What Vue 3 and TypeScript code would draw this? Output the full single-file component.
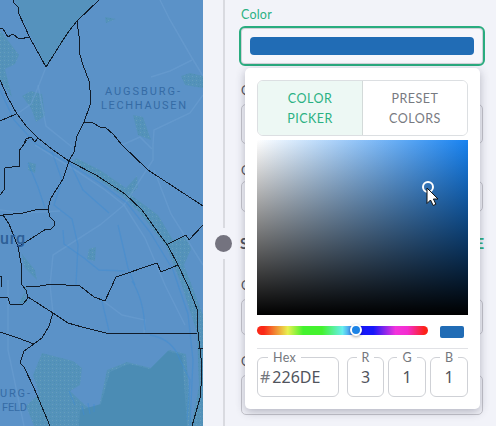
<script setup lang="ts">
import { ref } from 'vue'

interface Channel {
  label: string
  value: string
}

const channels: Channel[] = [
  { label: 'R', value: '3' },
  { label: 'G', value: '1' },
  { label: 'B', value: '1' },
]
const hex = ref('226DE')
const activeTab = ref(0)
const tabs: string[][] = [
  ['COLOR', 'PICKER'],
  ['PRESET', 'COLORS'],
]

const boundaries: string[] = [
  'M13 0 L14 3 L18 7 L19 14 L30 38 L46 67 L63 40 L69 31 L77 21 L99 0',
  'M0 28 L3 29 L8 37 L13 34 L19 39 L30 37',
  'M77 21 L79 36 L80 55 L83 65 L89 81 L90 90 L90 105 L84 122 L77 136 L74 152 L69 161 L63 179 L51 198 L48 208 L50 217 L54 221 L54 226 L51 229 L46 229 L18 247',
  'M84 122 L93 123 L100 127 L106 128 L113 134 L122 145 L148 170 L203 206',
  'M0 80 L8 98 L17 114 L27 127 L38 138 L53 150 L69 161 L96 175 L125 194 L142 210 L157 231 L168 246 L178 265 L188 286 L197 309 L198 332 L201 358 L202 375 L200 398 L192 426',
  'M0 121 L16 114',
  'M24 144 L26 139 L31 137 L35 142 L38 138',
  'M27 140 L19 151 L20 166 L5 168 L4 190 L0 195',
  'M0 216 L3 215 L23 213 L35 210 L48 209',
  'M3 215 L9 224 L13 234 L18 247 L21 263 L22 285 L26 290 L28 298 L23 304 L10 304 L8 298 L0 297',
  'M26 286 L40 286 L52 284 L80 286 L94 297 L105 301 L116 277 L157 263 L161 272 L178 265',
  'M168 244 L186 235 L189 240 L203 225',
  'M28 297 L53 313 L68 323 L82 327 L106 333 L197 333',
  'M53 313 L49 326 L42 338 L34 344 L24 351 L20 363 L24 367 L34 388 L50 426',
  'M0 332 L18 338 L34 344',
  'M198 348 L203 348',
  'M0 276 L2 277 L1 287',
]

const roads: string[] = [
  'M46 67 L39 85 L31 104 L17 114',
  'M160 0 L170 20 L192 58 L203 76',
  'M151 77 L170 71 L192 60',
  'M203 95 L190 113 L154 130 L153 145 L153 160 L140 180 L124 205 L100 225 L53 255 L50 285 L53 313',
  'M35 145 L75 170 L105 190 L124 205 L145 238 L165 285 L185 325',
  'M38 85 L46 126 L72 147',
  'M122 145 L140 137 L152 149',
  'M0 210 L22 213 L60 211',
  'M8 280 L8 350 L24 426',
  'M154 170 L171 214 L203 265',
  'M102 300 L122 315 L145 320 L144 333',
]

const streams: string[] = [
  'M0 90 L14 120 L36 144 L73 166 L100 183 L127 203 L150 232 L173 270 L188 314 L193 360 L190 426',
  'M28 163 L38 187 L45 208',
  'M52 152 L62 180 L54 205 L72 219 L78 245 L76 285',
  'M69 161 L83 190 L109 213',
  'M118 225 L128 268 L135 285',
  'M132 281 Q144 300 145 330',
  'M101 297 L109 331',
  'M150 335 Q173 339 180 360 L190 380 L187 420',
  'M63 230 L64 244 L84 258 L99 270 L125 271',
  'M69 391 L75 405 M82 406 L84 415 M88 403 L90 414 M94 404 L94 412',
]
</script>

<template>
  <main class="screen">
    <svg class="map" width="203" height="426" viewBox="0 0 203 426">
      <defs>
        <pattern id="speckle" width="4" height="4" patternUnits="userSpaceOnUse">
          <rect width="4" height="4" fill="#5492ba" />
          <rect width="1" height="1" fill="#659fbd" />
          <rect x="2" y="2" width="1" height="1" fill="#4c8fb2" />
        </pattern>
      </defs>
      <rect width="203" height="426" fill="#5b92c8" />
      <path d="M15 0H97L77 21L46 67L19 12Z" fill="#5592bd" />
      <g class="park">
        <path d="M0 30L10 43L19 55L15 64L5 69L12 97L0 80Z" />
        <path d="M22 96L31 91L42 94L45 116L36 122L31 108Z" />
        <path d="M181 76L190 73L203 76V88L185 85Z" />
        <path d="M133 115L143 117L151 140L138 135Z" />
        <path d="M105 17L116 19L106 23Z" />
        <path d="M76 158L100 170L126 188L137 176L138 187L131 195L158 215L173 240L187 236L191 249L184 265L203 315V426H191L199 386L197 333L182 286L166 246L139 212L123 196L96 178L72 163Z" />
        <path d="M28 162L36 164L35 173L28 170Z" />
        <path d="M89 249L96 247L95 261L87 259Z" />
        <path d="M22 254L35 270L37 280L24 267Z" />
        <path d="M28 286L24 289L27 303L19 303Z" />
        <path d="M42 353L73 361L82 368L80 385L70 391L87 407L99 407L107 370L127 362L151 368L169 350L186 354L192 426H34L26 406L39 394L33 375Z" />
      </g>
      <path d="M80 410L101 404L110 372L129 364L150 369L168 351L182 355L187 426H79Z" fill="#4b8cb4" />
      <path class="road" v-for="(d, i) in roads" :key="'r' + i" :d="d" />
      <path class="stream" v-for="(d, i) in streams" :key="'s' + i" :d="d" />
      <path class="boundary" v-for="(d, i) in boundaries" :key="'b' + i" :d="d" />
      <g class="place">
        <text x="105" y="95" textLength="75">AUGSBURG-</text>
        <text x="101" y="109" textLength="85">LECHHAUSEN</text>
        <text x="0" y="397" textLength="30">URG-</text>
        <text x="2" y="411" textLength="25">FELD</text>
      </g>
      <text class="city" x="0" y="244" textLength="25">urg</text>
    </svg>

    <section class="panel">
      <div class="rail">
        <span class="line first"></span>
        <span class="dot"></span>
        <span class="line rest"></span>
      </div>

      <div class="form">
        <label class="label active">Color</label>
        <div class="color-input"><span class="color-bar"></span></div>
        <label class="label">O</label>
        <div class="input"></div>
        <label class="label second">O</label>
        <div class="input small"></div>
        <div class="heading"><span>S</span><span class="action">E</span></div>
        <label class="label">O</label>
        <div class="input medium"></div>
        <label class="label fourth">O</label>
        <div class="input"></div>

        <div class="popover">
          <div class="tabs">
            <button
              v-for="(lines, i) in tabs"
              :key="i"
              class="tab"
              :class="{ selected: activeTab === i }"
              @click="activeTab = i"
            >
              <span v-for="line in lines" :key="line">{{ line }}</span>
            </button>
          </div>
          <div class="saturation">
            <span class="ring"></span>
            <svg class="cursor" width="13" height="20" viewBox="0 0 13 20">
              <path d="M1 1V16.5L4.5 13L7.2 18.5L9.9 17.2L7.4 12H12Z" fill="#fff" stroke="#111" stroke-width="1" />
            </svg>
          </div>
          <div class="hue-row">
            <div class="hue"><span class="knob"></span></div>
            <span class="swatch"></span>
          </div>
          <div class="fields">
            <fieldset class="field hex">
              <legend>Hex</legend>
              <span class="hash">#</span><span>{{ hex }}</span>
            </fieldset>
            <fieldset v-for="c in channels" :key="c.label" class="field">
              <legend>{{ c.label }}</legend>
              <span>{{ c.value }}</span>
            </fieldset>
          </div>
        </div>
      </div>
    </section>
  </main>
</template>

<style>
body {
  margin: 0;
  overflow: hidden;
}
</style>

<style scoped>
* {
  box-sizing: border-box;
}
.screen {
  display: flex;
  width: 496px;
  height: 426px;
  overflow: hidden;
  background: #f2f3f9;
  font-family: Lato, "Open Sans", sans-serif;
  color: #51545d;
}
.map {
  flex: none;
  display: block;
}
.park path {
  fill: url(#speckle);
}
.road {
  fill: none;
  stroke: #6c9ed1;
  stroke-width: 1.5;
  opacity: 0.55;
}
.stream {
  fill: none;
  stroke: #408bd2;
  stroke-width: 1.3;
  opacity: 0.5;
}
.boundary {
  fill: none;
  stroke: #101b29;
  stroke-width: 1;
  shape-rendering: crispEdges;
}
.place {
  font: 400 11px Roboto, sans-serif;
  fill: #356ba5;
}
.city {
  font: 500 16px Roboto, sans-serif;
  fill: #2d5f97;
}
.panel {
  flex: 1;
  display: flex;
}
.rail {
  width: 38px;
  padding-left: 3px;
  display: flex;
  flex-direction: column;
  align-items: center;
}
.line {
  width: 2px;
  background: #d9dae0;
}
.first {
  height: 228px;
}
.dot {
  width: 17px;
  height: 17px;
  margin: 7px 0;
  border-radius: 50%;
  background: #74737f;
}
.rest {
  flex: 1;
}
.form {
  position: relative;
  width: 242px;
  display: flex;
  flex-direction: column;
}
.label {
  height: 21px;
  line-height: 16px;
  font-size: 12.5px;
}
.label.active {
  height: 26px;
  padding-top: 7px;
  color: #2bb183;
  letter-spacing: 0.2px;
}
.color-input {
  width: 246px;
  height: 40px;
  margin: 0 0 17px -2px;
  padding: 9px;
  border: 2px solid #2aac7f;
  border-radius: 6px;
  background: #f6f6fb;
  box-shadow: inset 0 0 0 1px #d1d1d8;
}
.color-bar {
  display: block;
  height: 18px;
  border-radius: 4px;
  background: #216cb5;
}
.input {
  height: 40px;
  flex: none;
  border: 1px solid #c5c5cc;
  border-radius: 5px;
}
.second {
  margin-top: 19px;
  height: 18px;
}
.small {
  height: 31px;
}
.heading {
  display: flex;
  justify-content: space-between;
  height: 66px;
  padding-top: 22px;
  line-height: 19px;
  font-size: 15px;
  font-weight: 700;
}
.heading span {
  margin-left: -1px;
}
.heading .action {
  margin-right: -1px;
  color: #2bb183;
}
.medium {
  height: 36px;
}
.fourth {
  margin-top: 19px;
}
.popover {
  position: absolute;
  left: 4px;
  top: 68px;
  width: 235px;
  height: 341px;
  padding: 12px;
  border-radius: 5px;
  background: #fff;
  box-shadow: 0 3px 10px rgba(40, 40, 65, 0.3);
}
.tabs {
  display: flex;
  height: 56px;
  border: 1px solid #dcdfe2;
  border-radius: 6px;
  overflow: hidden;
}
.tab {
  flex: 1;
  display: flex;
  flex-direction: column;
  align-items: center;
  justify-content: center;
  padding: 1px 0 0;
  border: 0;
  background: #fff;
  color: #777a81;
  font: 12.5px/20px Lato, sans-serif;
  letter-spacing: 0.5px;
}
.selected {
  background: #edf8f4;
  border-right: 1px solid #d3dad9;
  color: #2bb183;
}
.saturation {
  position: relative;
  height: 175px;
  margin-top: 4px;
  background: linear-gradient(to top, #000, transparent), linear-gradient(to right, #fff, #1782f0);
}
.ring {
  position: absolute;
  left: 165px;
  top: 41px;
  width: 12px;
  height: 12px;
  border: 2px solid #fff;
  border-radius: 50%;
}
.cursor {
  position: absolute;
  left: 169px;
  top: 47px;
}
.hue-row {
  display: flex;
  justify-content: space-between;
  height: 34px;
  padding: 11px 4px 0 0;
  border-bottom: 1px solid #e1e2e6;
}
.hue {
  position: relative;
  width: 171px;
  height: 9px;
  border-radius: 5px;
  background: linear-gradient(to right, #fa2918 4%, #e8f050 18%, #44f22e 27%, #44f22e 38%, #68eeee 50%, #1717fa 61%, #1717fa 68%, #f234dc 81%, #f42ccf 88%, #fc2218 98%);
}
.knob {
  position: absolute;
  left: 93px;
  top: -2px;
  width: 12px;
  height: 12px;
  border: 2px solid #fff;
  border-radius: 50%;
  background: #1b83e6;
  box-shadow: 0 1px 3px rgba(0, 0, 0, 0.35);
}
.swatch {
  width: 24px;
  height: 12px;
  border-radius: 2px;
  background: #216cb5;
}
.fields {
  display: grid;
  grid-template-columns: 86px 37px 38px 38px;
  column-gap: 4px;
  padding-top: 2px;
}
.field {
  min-width: 0;
  height: 46px;
  margin: 0;
  padding: 0;
  border: 1px solid #cfd1d6;
  border-radius: 6px;
  text-align: center;
  font: 16px/28px "Noto Sans", sans-serif;
}
.field legend {
  height: 12px;
  margin: 0 auto;
  padding: 0 5px;
  font: 12.5px/14px Lato, sans-serif;
  color: #74777d;
}
.hex {
  width: 82px;
  padding-left: 2px;
  text-align: left;
}
.hex legend {
  margin-left: 8px;
  letter-spacing: 0.3px;
}
.hash {
  margin-right: 2px;
  color: #74777d;
}
</style>
